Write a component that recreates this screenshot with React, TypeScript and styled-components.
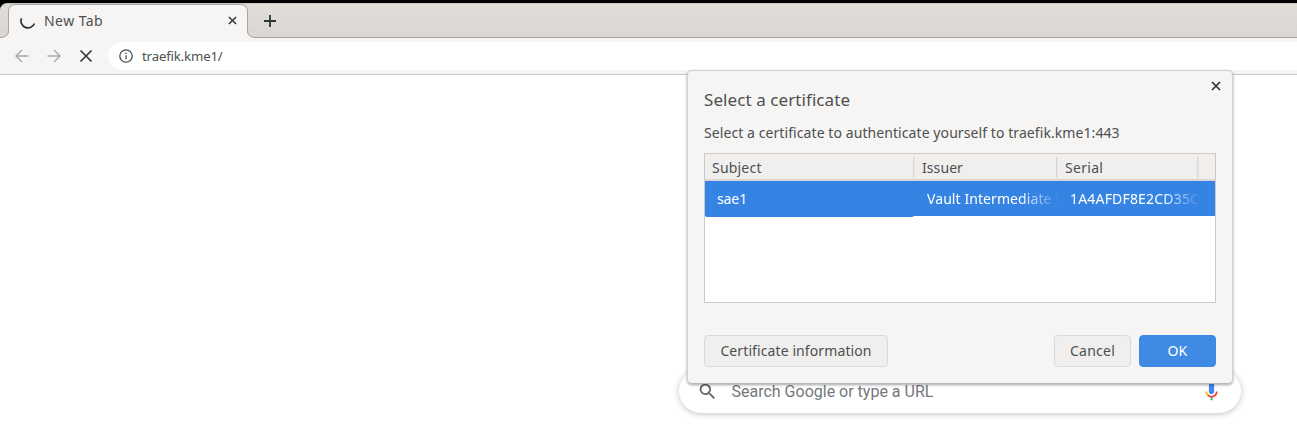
import React from "react";
import styled, { createGlobalStyle } from "styled-components";

const Global = createGlobalStyle`
  * { box-sizing: border-box; }
  body { margin: 0; background: #fff; color: #4c5051; overflow: hidden; font: 14px "Noto Sans", "Open Sans", sans-serif; }
  button { font: inherit; color: inherit; }
  svg { display: block; flex: none; }
`;

const Screen = styled.main`
  position: relative;
  width: 100%;
  height: 424px;
  overflow: hidden;
`;

const Desktop = styled.div`
  background: #000;
  padding-top: 3px;
`;

const TabStrip = styled.div`
  display: flex;
  height: 35px;
  padding-left: 8px;
  border-top: 1px solid #c9c6c3;
  border-radius: 7px 0 0 0;
  background: linear-gradient(#e1deda, #dad6d2);
  box-shadow: inset 0 -1px #a9a6a2;
`;

const Tab = styled.div`
  position: relative;
  display: flex;
  align-items: center;
  width: 240px;
  height: 34px;
  padding: 0 10px 2px 11px;
  border: 1px solid #a9a6a2;
  border-bottom: 0;
  border-radius: 7px 7px 0 0;
  background: #f6f5f4;
`;

const TabEdge = styled.svg<{ $side: "left" | "right" }>`
  position: absolute;
  bottom: 0;
  ${(p) => p.$side}: -8px;
  ${(p) => (p.$side === "left" ? "transform: scaleX(-1);" : "")}
`;

const Text = styled.span<{ $size?: number; $track?: number }>`
  font-size: ${(p) => p.$size ?? 14}px;
  letter-spacing: ${(p) => p.$track ?? 0.08}px;
  line-height: 20px;
  white-space: pre;
`;

const TabTitle = styled(Text)`
  flex: 1;
  padding-left: 8px;
`;

const NewTab = styled.div`
  display: grid;
  place-items: center;
  width: 44px;
  height: 34px;
`;

const Toolbar = styled.div`
  display: flex;
  align-items: center;
  height: 37px;
  padding: 0 0 1px 14px;
  background: #f6f5f4;
  border-bottom: 1px solid #c9c5c0;
`;

const Nav = styled.div`
  display: flex;
  gap: 16px;
  width: 94px;
`;

const Omnibox = styled.div`
  display: flex;
  align-items: center;
  flex: 1;
  gap: 8px;
  height: 28px;
  padding-left: 10px;
  border-radius: 14px 0 0 14px;
  background: #fff;
`;

const SearchBox = styled.div`
  position: absolute;
  left: 679px;
  top: 369px;
  display: flex;
  align-items: center;
  width: 562px;
  height: 44px;
  padding: 0 19px 0 18px;
  border-radius: 22px;
  background: #fff;
  box-shadow: 0 1px 6px rgba(32, 33, 36, 0.28);
`;

const SearchHint = styled.span`
  flex: 1;
  padding: 1px 0 0 13.5px;
  font: 16px/20px Roboto, sans-serif;
  color: #74787d;
`;

const Dialog = styled.section`
  position: absolute;
  left: 687px;
  top: 70px;
  width: 546px;
  height: 314px;
  padding: 19px 16px 16px;
  display: flex;
  flex-direction: column;
  border: 1px solid #d5d3d1;
  border-bottom-color: #bbb9b7;
  border-radius: 5px;
  background: #f6f5f4;
  box-shadow: 0 1px 3px rgba(0, 0, 0, 0.36);
`;

const Close = styled.div`
  position: absolute;
  right: 11px;
  top: 10px;
`;

const Title = styled(Text)`
  height: 20px;
`;

const Message = styled(Text)`
  margin-top: 13px;
`;

const Table = styled.div`
  height: 150px;
  margin-top: 10px;
  border: 1px solid #cdc9c5;
  background: #fff;
`;

const columns = "209px 143px 141px 1fr";

const HeadRow = styled.div`
  display: grid;
  grid-template-columns: ${columns};
  height: 27px;
  padding: 3px 0 2px;
  background: #f0efee;
  border-bottom: 2px solid #d9d6d4;
`;

const HeadCell = styled.div`
  display: flex;
  align-items: center;
  padding: 1px 0 0 8px;
  box-shadow: inset -1px 0 #d9d7d5, 1px 0 #e6e4e2;

  &:first-child { padding-left: 7px; }
  &:last-child { box-shadow: none; }
`;

const Row = styled.div`
  display: grid;
  grid-template-columns: ${columns};
  height: 35px;
  color: #fff;
  background: #3584e4;
`;

const Cell = styled.div<{ $focused?: boolean; $fade?: boolean }>`
  display: flex;
  align-items: center;
  overflow: hidden;
  height: ${(p) => (p.$focused ? 36 : 35)}px;
  padding: ${(p) => (p.$focused ? "0 0 1px 12px" : "0 0 0 13px")};
  border-radius: ${(p) => (p.$focused ? "0 0 2px 2px" : "0")};
  background: ${(p) => (p.$focused ? "#3584e4" : "none")};
  ${(p) => (p.$fade ? "-webkit-mask-image: linear-gradient(90deg, #000 74%, rgba(0,0,0,.08) 100%);" : "")}
`;

const Actions = styled.div`
  display: flex;
  gap: 8px;
  margin-top: auto;
`;

const Button = styled.button<{ $primary?: boolean; $width: number }>`
  width: ${(p) => p.$width}px;
  height: 32px;
  padding: 0;
  border: 1px solid ${(p) => (p.$primary ? "#3f8ae5" : "#dcdad9")};
  border-radius: 4px;
  color: ${(p) => (p.$primary ? "#fff" : "inherit")};
  background: ${(p) => (p.$primary ? "#3f8ae5" : "#f0efee")};

  &:first-child { margin-right: auto; }
`;

const Cross = ({ size, width }: { size: number; width: number }) => (
  <svg width={size} height={size} viewBox="0 0 10 10" stroke="#2e3436" strokeWidth={width} fill="none">
    <path d="M1 1l8 8M9 1l-8 8" />
  </svg>
);

const Arrow = ({ flip }: { flip?: boolean }) => (
  <svg width="16" height="16" viewBox="0 0 16 16" stroke="#a7a8a8" strokeWidth="1.4" fill="none" transform={flip ? "scale(-1 1)" : undefined}>
    <path d="M14.500 8H2.500M8 2L2 8l6 6" />
  </svg>
);

const Edge = ({ side }: { side: "left" | "right" }) => (
  <TabEdge $side={side} width="8" height="8" viewBox="0 0 8 8">
    <path d="M0 0Q0 7.500 8 7.500V8H0z" fill="#f6f5f4" />
    <path d="M.5 0Q.5 7.500 8 7.500" fill="none" stroke="#a9a6a2" />
  </TabEdge>
);

export default function App() {
  return (
    <Screen>
      <Global />
      <Desktop>
        <TabStrip>
          <Tab>
            <Edge side="left" />
            <svg width="16" height="16" viewBox="0 0 16 16" fill="none" stroke="#2e3436" strokeWidth="1.7">
              <path d="M1.500 5.300A7 7 0 0 0 14.500 10.500" />
            </svg>
            <TabTitle $track={0.45}>New Tab</TabTitle>
            <Cross size={9} width={1.6} />
            <Edge side="right" />
          </Tab>
          <NewTab>
            <svg width="12" height="12" viewBox="0 0 12 12" stroke="#2e3436" strokeWidth="1.8">
              <path d="M6 0v12M0 6h12" />
            </svg>
          </NewTab>
        </TabStrip>
      </Desktop>
      <Toolbar>
        <Nav>
          <Arrow />
          <Arrow flip />
          <svg width="16" height="16" viewBox="0 0 16 16" stroke="#2e3436" strokeWidth="1.6">
            <path d="M2.500 2.500l11 11M13.500 2.500l-11 11" />
          </svg>
        </Nav>
        <Omnibox>
          <svg width="16" height="16" viewBox="0 0 16 16" fill="none" stroke="#4b4f50" strokeWidth="1.3">
            <circle cx="8" cy="8" r="6.2" />
            <path d="M8 7.200v4M8 4.600v1.500" />
          </svg>
          <Text $size={13.2} $track={-0.15}>traefik.kme1/</Text>
        </Omnibox>
      </Toolbar>

      <SearchBox>
        <svg width="21" height="21" viewBox="0 0 24 24" fill="#5f6368">
          <path d="M15.500 14h-.79l-.28-.27A6.470 6.470 0 0 0 16 9.500 6.500 6.500 0 1 0 9.500 16c1.610 0 3.090-.59 4.230-1.570l.27.28v.79l5 4.990L20.490 19l-4.990-5zm-6 0C7.010 14 5 11.990 5 9.500S7.010 5 9.500 5 14 7.010 14 9.500 11.990 14 9.500 14z" />
        </svg>
        <SearchHint>Search Google or type a URL</SearchHint>
        <svg width="21" height="21" viewBox="0 0 24 24">
          <path d="M12 15c1.700 0 3-1.300 3-3V5c0-1.700-1.300-3-3-3S9 3.300 9 5v7c0 1.700 1.300 3 3 3z" fill="#4285f4" />
          <path d="M11 18.900h2V22h-2z" fill="#34a853" />
          <path d="M7 12H5c0 1.900.8 3.700 2.100 4.900l1.400-1.400A5 5 0 0 1 7 12z" fill="#fbbc04" />
          <path d="M12 17a5 5 0 0 1-3.500-1.500l-1.400 1.400A7 7 0 0 0 12 19c3.900 0 7-3.100 7-7h-2a5 5 0 0 1-5 5z" fill="#ea4335" />
        </svg>
      </SearchBox>

      <Dialog>
        <Close><Cross size={10} width={1.7} /></Close>
        <Title $size={17}>Select a certificate</Title>
        <Message>Select a certificate to authenticate yourself to traefik.kme1:443</Message>
        <Table>
          <HeadRow>
            <HeadCell><Text $track={0.2}>Subject</Text></HeadCell>
            <HeadCell><Text>Issuer</Text></HeadCell>
            <HeadCell><Text $track={0.3}>Serial</Text></HeadCell>
            <HeadCell />
          </HeadRow>
          <Row>
            <Cell $focused><Text $track={-0.1}>sae1</Text></Cell>
            <Cell $fade><Text>Vault Intermediate C</Text></Cell>
            <Cell $fade><Text $track={0.18}>1A4AFDF8E2CD35C</Text></Cell>
          </Row>
        </Table>
        <Actions>
          <Button $width={184}><Text $track={0.1}>Certificate information</Text></Button>
          <Button $width={77}><Text $track={0.25}>Cancel</Text></Button>
          <Button $width={77} $primary><Text>OK</Text></Button>
        </Actions>
      </Dialog>
    </Screen>
  );
}
